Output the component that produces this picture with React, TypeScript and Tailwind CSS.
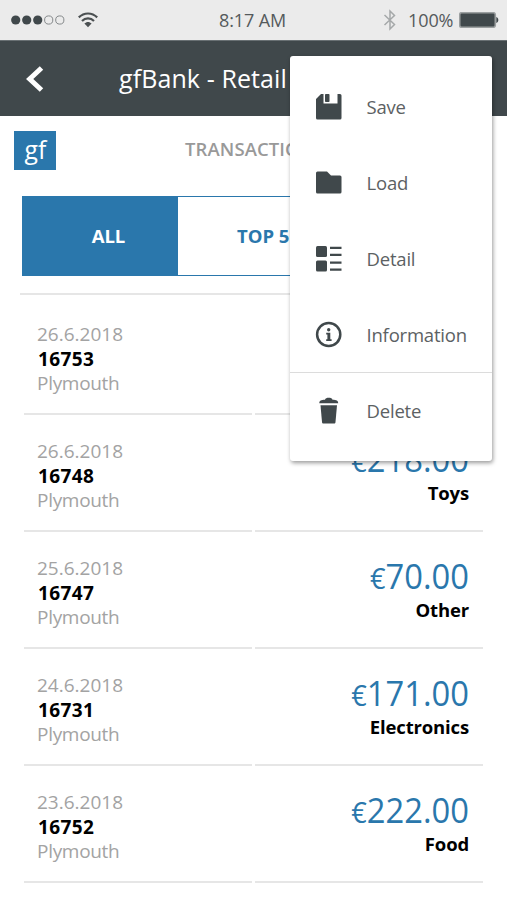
import type { ReactNode } from "react";

type Transaction = {
  date: string;
  id: string;
  city: string;
  amount: string;
  category: string;
};

const TRANSACTIONS: Transaction[] = [
  { date: "26.6.2018", id: "16753", city: "Plymouth", amount: "124.00", category: "Food" },
  { date: "26.6.2018", id: "16748", city: "Plymouth", amount: "218.00", category: "Toys" },
  { date: "25.6.2018", id: "16747", city: "Plymouth", amount: "70.00", category: "Other" },
  { date: "24.6.2018", id: "16731", city: "Plymouth", amount: "171.00", category: "Electronics" },
  { date: "23.6.2018", id: "16752", city: "Plymouth", amount: "222.00", category: "Food" },
];

function StatusBar() {
  return (
    <div className="flex h-10 shrink-0 items-center bg-[#ebebeb] text-[18px] text-[#555a5c]">
      <svg width="54" height="12" viewBox="0 0 54 12" className="ml-[11px]">
        <circle cx="4.7" cy="6" r="4.6" fill="#40484b" />
        <circle cx="15.7" cy="6" r="4.6" fill="#40484b" />
        <circle cx="26.7" cy="6" r="4.6" fill="#40484b" />
        <circle cx="37.7" cy="6" r="4.1" fill="none" stroke="#85898b" />
        <circle cx="48.8" cy="6" r="4.1" fill="none" stroke="#85898b" />
      </svg>
      <svg width="20" height="16" viewBox="0 0 20 16" className="ml-[13px]" fill="none" stroke="#4b5052" strokeWidth="2.2">
        <path d="M.8 5.400C6 .2 14 .2 19.200 5.400" />
        <path d="M4 9c3.400-3.500 8.600-3.500 12 0" />
        <path d="M6.400 11.600c2.100-2.200 5.100-2.200 7.200 0L10 15.200z" fill="#4b5052" stroke="none" />
      </svg>
      <span className="ml-[121px] w-[70px] whitespace-nowrap tracking-[-0.1px]">8:17 AM</span>
      <svg width="14" height="22" viewBox="0 0 14 22" className="ml-[94px]" fill="none" stroke="#a5a8a9" strokeWidth="1.500">
        <path d="M1.500 6l10 9.500L7 20V2l4.500 4.500-10 9.500" />
      </svg>
      <span className="ml-[11px] w-[46px] whitespace-nowrap tracking-[-0.1px]">100%</span>
      <svg width="40" height="16" viewBox="0 0 40 16" className="ml-[5px]">
        <rect x=".7" y=".7" width="35.600" height="14.600" rx="2" fill="#40484b" stroke="#9b9fa0" strokeWidth="1.600" />
        <path d="M37.300 5c2.700 1 2.700 5 0 6z" fill="#40484b" />
      </svg>
    </div>
  );
}

function Row({ item, first }: { item: Transaction; first: boolean }) {
  const height = first ? "h-[120px] pt-[27px]" : "h-[117px] pt-[24px]";
  return (
    <div className="ml-6 flex gap-[3px]">
      <div className={`w-[228px] border-b-2 border-[#e6e6e6] pl-[13px] text-[19px] leading-[24.5px] text-[#a3a3a3] ${height}`}>
        <div>{item.date}</div>
        <div className="pl-px font-bold text-black tracking-[0.4px]">{item.id}</div>
        <div className="tracking-[-0.3px]">{item.city}</div>
      </div>
      <div className={`w-[228px] border-b-2 border-[#e6e6e6] pr-[14px] text-right ${height}`}>
        <div className="h-[41px] origin-right scale-x-[0.935] text-[35px] leading-[40px] text-[#2a77ac]">
          <span className="text-[29px]">€</span>
          {item.amount}
        </div>
        <div className="text-[18.5px] leading-[25px] font-bold tracking-[-0.15px] text-black">{item.category}</div>
      </div>
    </div>
  );
}

function MenuItem({ label, children }: { label: string; children: ReactNode }) {
  return (
    <div className="flex h-[76px] items-center pl-[24.500px]">
      <svg width="28" height="28" viewBox="0 0 28 28" fill="#40484b">
        {children}
      </svg>
      <span className="ml-6 text-[18.5px] tracking-[-0.2px] text-[#5c6163]">{label}</span>
    </div>
  );
}

function Menu() {
  return (
    <div className="absolute top-14 left-[290px] h-[405px] w-[202px] rounded-[3px] bg-white pt-[13px] shadow-[1px_2px_4px_rgba(0,0,0,0.4)]">
      <MenuItem label="Save">
        <path d="M1 6l5-5h2.500V10.500h14V1H25a1.500 1.500 0 0 1 1.500 1.500V25a1.500 1.500 0 0 1-1.500 1.500H2.500A1.500 1.500 0 0 1 1 25z" />
        <rect x="10" y="1" width="4.500" height="8" rx=".8" />
      </MenuItem>
      <MenuItem label="Load">
        <path d="M2.500 2.500h9.500l4 4H25A1.500 1.500 0 0 1 26.500 8v15a1.500 1.500 0 0 1-1.500 1.500H2.500A1.500 1.500 0 0 1 1 23V4a1.500 1.500 0 0 1 1.500-1.500z" />
      </MenuItem>
      <MenuItem label="Detail">
        <rect x="1" y="1" width="11" height="11" rx="1.500" />
        <rect x="1" y="15.500" width="11" height="11" rx="1.500" />
        <path d="M15 1.800h11.500V4H15zM15 8.800h11.500V11H15zM15 16.500h11.500v2.200H15zM15 23.500h11.500v2.200H15z" />
      </MenuItem>
      <MenuItem label="Information">
        <circle cx="13.700" cy="13.500" r="11.600" fill="none" stroke="#40484b" strokeWidth="2.500" />
        <circle cx="13.700" cy="8.700" r="1.700" />
        <path d="M11.200 11.800h4.100v6.500h1.300V20h-5.400v-1.700h1.200v-4.800h-1.200z" />
      </MenuItem>
      <div className="-mt-px h-0 border-t border-[#dcdcdc]" />
      <MenuItem label="Delete">
        <path d="M4.300 6.200c0-2.600 1.700-3.300 5.700-3.400.5-2.600 7-2.600 7.500 0 4 .1 5.700.8 5.700 3.400z" />
        <path d="M5.500 8.200h16.500L20.500 25c-.1 1-.6 1.500-1.500 1.500H8.500c-.9 0-1.400-.5-1.500-1.500z" />
      </MenuItem>
    </div>
  );
}

export default function App() {
  return (
    <div className="relative flex h-[900px] w-[507px] flex-col overflow-hidden bg-white font-['Open_Sans','Noto_Sans',sans-serif]">
      <StatusBar />

      {/* Title bar */}
      <header className="flex h-19 shrink-0 items-center border-t border-[#697073] bg-[#40484b] text-white">
        <svg width="18" height="28" viewBox="0 0 18 28" className="ml-[26px]" fill="none" stroke="white" strokeWidth="5">
          <path d="M15.500 3L3.700 14l11.800 11" />
        </svg>
        <h1 className="ml-[75px] text-[25px] tracking-[0.1px] whitespace-nowrap">gfBank - Retail</h1>
      </header>

      {/* Brand + section title */}
      <div className="flex h-20 shrink-0">
        <div className="mt-[15px] ml-[14px] flex h-[39px] w-[42px] items-center justify-center bg-[#2a77ac] pb-[3px] text-[26px] leading-none text-white">
          <span className="scale-x-95">gf</span>
        </div>
        <div className="mt-[20px] ml-[129px] text-[18.5px] leading-[26px] font-semibold tracking-[0.1px] text-[#999]">TRANSACTIONS</div>
      </div>

      {/* Tabs */}
      <div className="ml-[22px] flex h-[80px] w-[463px] shrink-0 border border-[#2a77ac] text-[18.5px] font-bold">
        <div className="flex w-[155px] items-center justify-center bg-[#2a77ac] pl-[16px] text-white">ALL</div>
        <div className="flex items-center pl-[59px] text-[#2a77ac]">TOP 5</div>
      </div>

      <div className="mt-[17px] ml-[20px] h-[2px] w-[465px] shrink-0 bg-[#e6e6e6]" />
      {TRANSACTIONS.map((item, i) => (
        <Row key={item.id} item={item} first={i === 0} />
      ))}

      <Menu />
    </div>
  );
}
